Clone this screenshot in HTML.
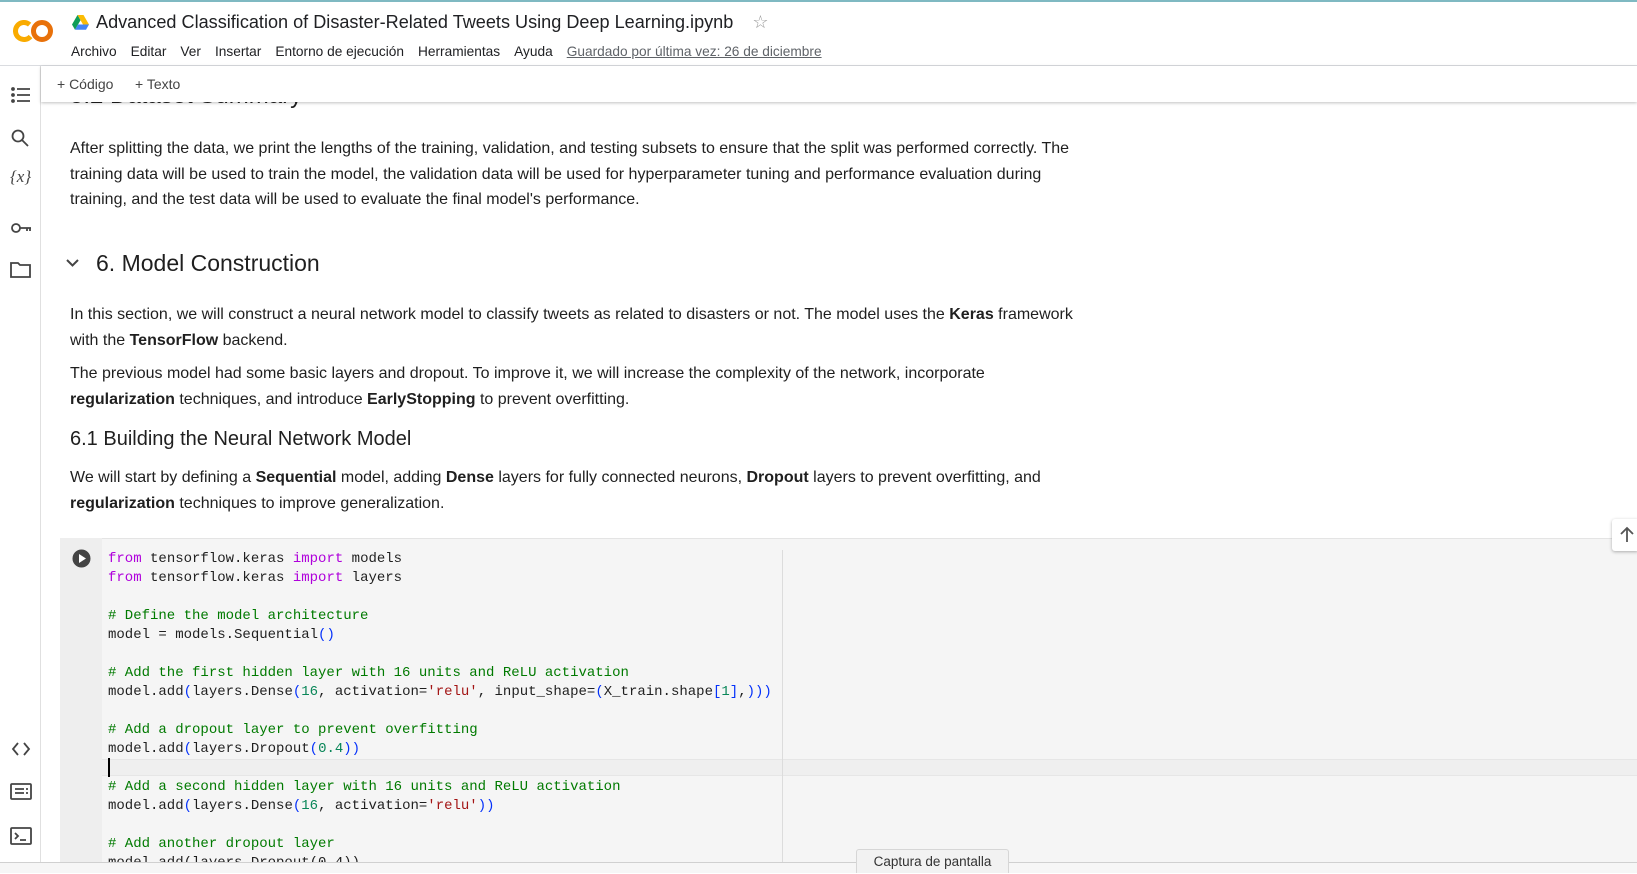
<!DOCTYPE html>
<html><head><meta charset="utf-8"><style>
*{margin:0;padding:0;box-sizing:border-box}
body{width:1637px;height:873px;overflow:hidden;background:#fff;font-family:"Liberation Sans",Arial,sans-serif;color:#1f1f1f;position:relative}
.abs{position:absolute}
.top{left:0;top:0;width:1637px;height:2px;background:#7fb9c2}
.hdr{left:0;top:2px;width:1637px;height:64px;border-bottom:1px solid #dadce0;background:#fff}
.title{left:96px;top:12px;font-size:18.1px;color:#202124;white-space:nowrap}
.menu{left:71px;top:44px;font-size:13.7px;color:#202124;white-space:nowrap}
.menu span{margin-right:14px}
.menu u{color:#5f6368}
.side{left:0;top:66px;width:41px;height:807px;border-right:1px solid #e0e0e0;background:#fff}
.tb{left:41px;top:66px;width:1596px;height:36px;background:#fff;box-shadow:0 1px 3px rgba(0,0,0,.25);font-size:14px;color:#444;z-index:3}
.p{left:70px;font-size:16px;line-height:25.6px;white-space:nowrap;color:#1f1f1f}
.p b{font-weight:bold}
.code{left:60px;top:538px;width:1577px;height:324px;background:#f5f5f5;border-top:1px solid #e4e4e4}
.gut{left:60px;top:538px;width:42px;height:324px;background:#eeeeee}
pre{position:absolute;left:108px;top:550px;font-family:"Liberation Mono",monospace;font-size:14px;line-height:19px;color:#1f1f1f}
.k{color:#af00db}.c{color:#007a00}.s{color:#a31515}.n{color:#098658}.b{color:#0431fa}
.ic{stroke:#444;fill:none;stroke-width:1.8}
</style></head><body>
<div class="abs top"></div>
<div class="abs hdr"></div>
<svg class="abs" style="left:13px;top:18px" width="42" height="26" viewBox="0 0 42 26"><circle cx="11" cy="13" r="8.5" fill="none" stroke="#f9ab00" stroke-width="5" stroke-dasharray="40 14" transform="rotate(40 11 13)"/><circle cx="29" cy="13" r="8.5" fill="none" stroke="#e8710a" stroke-width="5"/></svg>
<svg class="abs" style="left:72px;top:15px" width="17" height="15" viewBox="0 0 17 15"><path d="M5.5 0h6l5.5 9.5h-6z" fill="#fbbc04"/><path d="M5.5 0L0 9.5l3 5.2L8.5 5.2z" fill="#0f9d58"/><path d="M3 14.7h11l3-5.2H6z" fill="#4285f4"/></svg>
<div class="abs title">Advanced Classification of Disaster-Related Tweets Using Deep Learning.ipynb <span style="color:#999;margin-left:14px">☆</span></div>
<div class="abs menu"><span>Archivo</span><span>Editar</span><span>Ver</span><span>Insertar</span><span>Entorno de ejecución</span><span>Herramientas</span><span>Ayuda</span><u>Guardado por última vez: 26 de diciembre</u></div>
<div class="abs side"></div>
<svg class="abs" style="left:10px;top:85px" width="22" height="200" viewBox="0 0 22 200">
<g class="ic"><circle cx="3" cy="4" r="1" fill="#444"/><circle cx="3" cy="10" r="1" fill="#444"/><circle cx="3" cy="16" r="1" fill="#444"/><path d="M7 4h13M7 10h13M7 16h13"/>
<circle cx="8" cy="51" r="5.5"/><path d="M12 55l6 6"/>
<circle cx="6" cy="143" r="4"/><path d="M10 143h11M17 143v3M20 143v3"/>
<path d="M1 178h7l2 2h10v12H1z"/></g>
<text x="0" y="97" font-family="Liberation Serif" font-style="italic" font-size="17" fill="#444">{x}</text>
</svg>
<svg class="abs" style="left:10px;top:738px" width="22" height="110" viewBox="0 0 22 110"><g class="ic"><path d="M8 5l-5 6 5 6M14 5l5 6-5 6"/><rect x="1" y="46" width="20" height="15" rx="1"/><path d="M5 51h9M5 55h9M16 51h2M16 55h2"/><rect x="1" y="90" width="20" height="16" rx="1"/><path d="M5 95l3 3-3 3M10 102h6"/></g></svg>
<div class="abs" style="left:70px;top:82px;font-size:24px;color:#1f1f1f;z-index:1">5.2 Dataset Summary</div>
<div class="abs tb"><span class="abs" style="left:16px;top:10px">+ Código</span><span class="abs" style="left:94px;top:10px">+ Texto</span></div>
<div class="abs p" style="top:136px">After splitting the data, we print the lengths of the training, validation, and testing subsets to ensure that the split was performed correctly. The<br>training data will be used to train the model, the validation data will be used for hyperparameter tuning and performance evaluation during<br>training, and the test data will be used to evaluate the final model's performance.</div>
<svg class="abs" style="left:66px;top:259px" width="13" height="9" viewBox="0 0 13 9"><path d="M1 1l5.5 5.5L12 1" stroke="#444" stroke-width="2" fill="none"/></svg>
<div class="abs" style="left:96px;top:250px;font-size:23px;color:#1f1f1f">6. Model Construction</div>
<div class="abs p" style="top:302px">In this section, we will construct a neural network model to classify tweets as related to disasters or not. The model uses the <b>Keras</b> framework<br>with the <b>TensorFlow</b> backend.</div>
<div class="abs p" style="top:361px">The previous model had some basic layers and dropout. To improve it, we will increase the complexity of the network, incorporate<br><b>regularization</b> techniques, and introduce <b>EarlyStopping</b> to prevent overfitting.</div>
<div class="abs" style="left:70px;top:428px;font-size:20px;color:#1f1f1f">6.1 Building the Neural Network Model</div>
<div class="abs p" style="top:465px">We will start by defining a <b>Sequential</b> model, adding <b>Dense</b> layers for fully connected neurons, <b>Dropout</b> layers to prevent overfitting, and<br><b>regularization</b> techniques to improve generalization.</div>
<div class="abs code"></div>
<div class="abs gut"></div>
<div class="abs" style="left:102px;top:759px;width:1535px;height:17px;background:#efefef;border-top:1px solid #e6e6e6;border-bottom:1px solid #e6e6e6"></div>
<div class="abs" style="left:782px;top:550px;width:1px;height:312px;background:#dcdcdc"></div>
<svg class="abs" style="left:72px;top:549px" width="19" height="19" viewBox="0 0 19 19"><circle cx="9.5" cy="9.5" r="9" fill="#444"/><path d="M7 5l7 4.5L7 14z" fill="#fff"/></svg>
<div class="abs" style="left:108px;top:758px;width:2px;height:19px;background:#000"></div>
<pre><span class="k">from</span> tensorflow.keras <span class="k">import</span> models
<span class="k">from</span> tensorflow.keras <span class="k">import</span> layers

<span class="c"># Define the model architecture</span>
model = models.Sequential<span class="b">()</span>

<span class="c"># Add the first hidden layer with 16 units and ReLU activation</span>
model.add<span class="b">(</span>layers.Dense<span class="b">(</span><span class="n">16</span>, activation=<span class="s">'relu'</span>, input_shape=<span class="b">(</span>X_train.shape<span class="b">[</span><span class="n">1</span><span class="b">]</span>,<span class="b">)))</span>

<span class="c"># Add a dropout layer to prevent overfitting</span>
model.add<span class="b">(</span>layers.Dropout<span class="b">(</span><span class="n">0.4</span><span class="b">))</span>

<span class="c"># Add a second hidden layer with 16 units and ReLU activation</span>
model.add<span class="b">(</span>layers.Dense<span class="b">(</span><span class="n">16</span>, activation=<span class="s">'relu'</span><span class="b">))</span>

<span class="c"># Add another dropout layer</span>
model.add(layers.Dropout(0.4))</pre>
<div class="abs" style="left:0;top:862px;width:1637px;height:11px;background:#f6f6f6;border-top:1px solid #d0d0d0"></div>
<div class="abs" style="left:856px;top:849px;width:153px;height:24px;background:#f2f2f2;border:1px solid #d6d6d6;border-bottom:none;border-radius:3px 3px 0 0;font-size:13.5px;color:#333;text-align:center;line-height:24px">Captura de pantalla</div>
<div class="abs" style="left:1612px;top:519px;width:26px;height:32px;background:#fff;border-radius:3px 0 0 3px;box-shadow:0 1px 3px rgba(0,0,0,.3)"><svg width="26" height="32" viewBox="0 0 26 32"><path d="M15 23V10M9 15l6-6 6 6" stroke="#555" stroke-width="1.8" fill="none"/></svg></div>
</body></html>
